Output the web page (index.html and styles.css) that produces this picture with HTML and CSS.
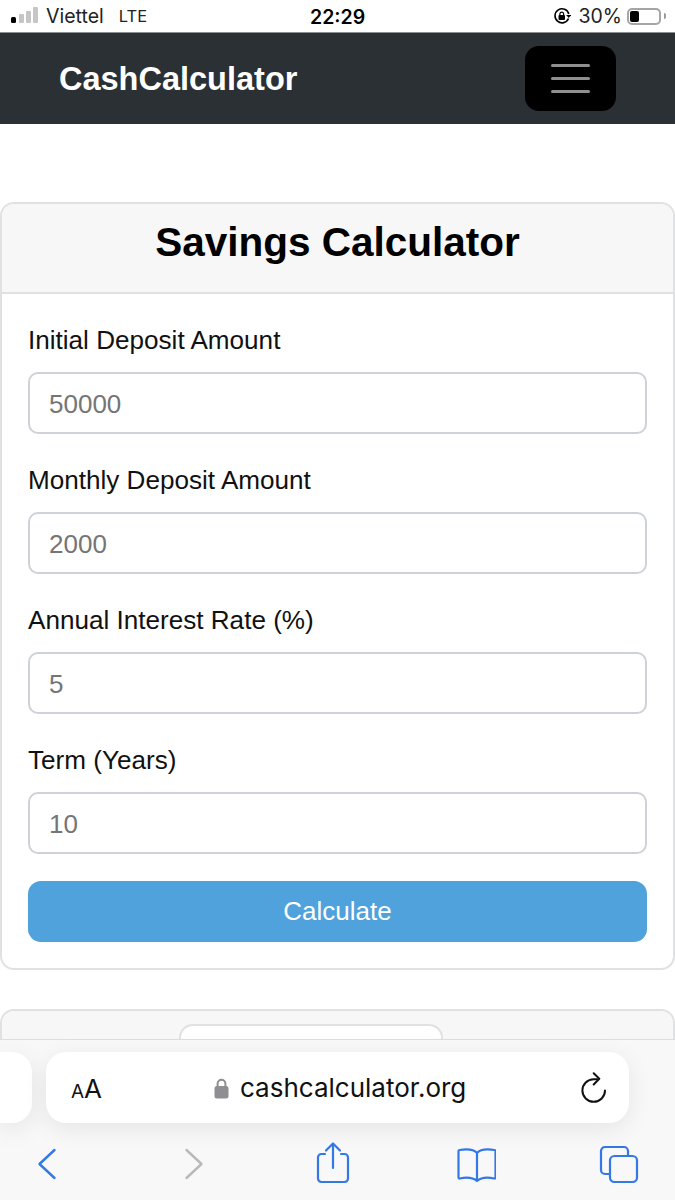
FILE: index.html
```html
<!DOCTYPE html>
<html lang="en">
<head>
<meta charset="UTF-8">
<meta name="viewport" content="width=device-width, initial-scale=1.0">
<title>Savings Calculator</title>
<link rel="stylesheet" href="styles.css">
</head>
<body>
<div class="status-bar">
  <div class="status-left">
    <svg class="signal" width="28" height="18" viewBox="0 0 28 18">
      <rect x="0" y="10" width="5" height="6" rx="1.5" fill="#000"/>
      <rect x="8" y="7" width="5" height="9" rx="1" fill="#c6c6c6"/>
      <rect x="15" y="4" width="5" height="12" rx="1" fill="#c6c6c6"/>
      <rect x="22" y="0" width="5" height="16" rx="1" fill="#c6c6c6"/>
    </svg>
    <span class="carrier">Viettel</span>
    <span class="network">LTE</span>
  </div>
  <div class="status-time">22:29</div>
  <div class="status-right">
    <svg class="rotation-lock" width="18" height="18" viewBox="0 0 18 18">
      <path d="M15.5 11.500A7 7 0 1 1 15.800 7" fill="none" stroke="#000" stroke-width="1.600"/>
      <path d="M13.200 8h5l-2.500 3z" fill="#000"/>
      <rect x="5.500" y="8" width="6.500" height="5" rx="1" fill="#000"/>
      <path d="M6.900 8V6.600a1.900 1.900 0 0 1 3.700 0V8" fill="none" stroke="#000" stroke-width="1.200"/>
    </svg>
    <span class="battery-text">30%</span>
    <div class="battery"><div class="battery-fill"></div></div>
    <div class="battery-nub"></div>
  </div>
</div>

<nav class="navbar">
  <a class="brand" href="#">CashCalculator</a>
  <button class="toggler" type="button">
    <span class="toggler-line"></span>
    <span class="toggler-line"></span>
    <span class="toggler-line"></span>
  </button>
</nav>

<main class="content">
  <section class="card">
    <h1 class="card-header">Savings Calculator</h1>
    <form class="card-body" action="#" method="post">
      <div class="field">
        <label class="field-label" for="initial">Initial Deposit Amount</label>
        <input class="field-input" id="initial" type="text" placeholder="50000">
      </div>
      <div class="field">
        <label class="field-label" for="monthly">Monthly Deposit Amount</label>
        <input class="field-input" id="monthly" type="text" placeholder="2000">
      </div>
      <div class="field">
        <label class="field-label" for="rate">Annual Interest Rate (%)</label>
        <input class="field-input" id="rate" type="text" placeholder="5">
      </div>
      <div class="field">
        <label class="field-label" for="term">Term (Years)</label>
        <input class="field-input" id="term" type="text" placeholder="10">
      </div>
      <button class="calc-btn" type="button">Calculate</button>
    </form>
  </section>

  <section class="card card-next">
    <div class="card-next-head"><div class="pill-tab"></div></div>
  </section>
</main>

<div class="safari">
  <div class="safari-tabs">
    <div class="url-stub"></div>
    <div class="url-bar">
      <span class="text-size"><span class="text-size-small">A</span>A</span>
      <div class="url-center">
        <svg width="15" height="21" viewBox="0 0 15 21">
          <rect x="0.500" y="8" width="14" height="12.500" rx="2.500" fill="#8e8e93"/>
          <path d="M3.600 9V5.600a3.900 3.900 0 0 1 7.800 0V9" fill="none" stroke="#8e8e93" stroke-width="2"/>
        </svg>
        <span class="url-text">cashcalculator.org</span>
      </div>
      <svg class="reload" width="28" height="32" viewBox="0 0 28 32">
        <path d="M18 7.200H13.700A11.300 11.300 0 1 0 25 18.500" fill="none" stroke="#111" stroke-width="2" stroke-linecap="round"/>
        <path d="M13.700 1.200L19.300 6.800 13.700 12.500" fill="none" stroke="#111" stroke-width="2" stroke-linecap="round" stroke-linejoin="round"/>
      </svg>
    </div>
  </div>
  <div class="toolbar">
    <svg width="40" height="44" viewBox="0 0 40 44">
      <path d="M27.500 9L12.500 23l15 14" fill="none" stroke="#3478e5" stroke-width="2.400" stroke-linecap="round" stroke-linejoin="round"/>
    </svg>
    <svg width="40" height="44" viewBox="0 0 40 44">
      <path d="M16.500 9l15 14-15 14" fill="none" stroke="#b9b9bc" stroke-width="2.400" stroke-linecap="round" stroke-linejoin="round"/>
    </svg>
    <svg width="40" height="44" viewBox="0 0 40 44">
      <path d="M12 13H8.500a3.500 3.500 0 0 0-3.500 3.500v21a3.500 3.500 0 0 0 3.500 3.500h23a3.500 3.500 0 0 0 3.500-3.500v-21a3.500 3.500 0 0 0-3.500-3.500H28" fill="none" stroke="#3478e5" stroke-width="2.200" stroke-linecap="round"/>
      <path d="M20 27V2.500M13 9.500l7-7 7 7" fill="none" stroke="#3478e5" stroke-width="2.200" stroke-linecap="round" stroke-linejoin="round"/>
    </svg>
    <svg width="40" height="44" viewBox="0 0 40 44">
      <g transform="translate(1 3.500)">
        <path d="M20 8.500C17 5 12 4 2.500 5.500a1 1 0 0 0-1 1V33a1 1 0 0 0 1.200 1C10 32.500 16 33 20 36.500 24 33 30 32.500 37.300 34a1 1 0 0 0 1.200-1V6.500a1 1 0 0 0-1-1C28 4 23 5 20 8.500zM20 8.500V36" fill="none" stroke="#3478e5" stroke-width="2.200" stroke-linejoin="round"/>
      </g>
    </svg>
    <svg width="40" height="44" viewBox="0 0 40 44">
      <path d="M29 14v-4a4 4 0 0 0-4-4H6a4 4 0 0 0-4 4v19a4 4 0 0 0 4 4h5" fill="none" stroke="#3478e5" stroke-width="2.200"/>
      <rect x="11" y="15" width="27" height="26" rx="4.500" fill="none" stroke="#3478e5" stroke-width="2.200"/>
    </svg>
  </div>
</div>
</body>
</html>
```

FILE: styles.css
```css
html, body {
  margin: 0;
  padding: 0;
}

body {
  position: relative;
  height: 1200px;
  overflow: hidden;
  font-family: "Liberation Sans", Arial, sans-serif;
  background-color: #fff;
  color: #000;
}

/* phone status bar */
.status-bar {
  display: flex;
  justify-content: space-between;
  align-items: center;
  height: 32px;
  padding: 0 9px 0 11px;
  border-bottom: 1px solid #8d8f91;
  font-family: Inter, "Liberation Sans", sans-serif;
  font-size: 18px;
  position: relative;
}

.status-left {
  display: flex;
  align-items: center;
  width: 170px;
  color: #222;
}

.signal {
  margin-right: 7px;
}

.carrier {
  margin-right: 15px;
  font-size: 19.5px;
}

.network {
  font-size: 16.5px;
}

.status-time {
  position: absolute;
  left: 310px;
  top: 6px;
  font-size: 19.5px;
  font-weight: 600;
  line-height: 22px;
}

.status-right {
  display: flex;
  align-items: center;
}

.rotation-lock {
  margin-right: 8px;
}

.battery-text {
  font-size: 19.5px;
  margin-right: 5px;
  color: #222;
}

.battery {
  display: flex;
  box-sizing: border-box;
  width: 34px;
  height: 17px;
  border: 2px solid #a5a5a5;
  border-radius: 5px;
  padding: 1px;
}

.battery-fill {
  width: 9px;
  background-color: #000;
  border-radius: 2px;
}

.battery-nub {
  width: 2px;
  height: 6px;
  margin-left: 3px;
  background-color: #999;
  border-radius: 0 2px 2px 0;
}

/* site header */
.navbar {
  display: flex;
  justify-content: space-between;
  align-items: center;
  height: 91px;
  padding: 0 59px;
  background-color: #2b3035;
}

.brand {
  padding-top: 2px;
  color: #fff;
  font-size: 32.5px;
  font-weight: 700;
  text-decoration: none;
}

.toggler {
  display: flex;
  flex-direction: column;
  justify-content: center;
  align-items: center;
  gap: 10px;
  box-sizing: border-box;
  width: 91px;
  height: 65px;
  padding: 0;
  background-color: #000;
  border: none;
  border-radius: 14px;
}

.toggler-line {
  display: block;
  width: 39px;
  height: 3px;
  background-color: #8f8f8f;
  border-radius: 2px;
}

.content {
  padding-top: 78px;
}

.card {
  border: 2px solid #e0e1e3;
  border-radius: 14px;
  background-color: #fff;
  overflow: hidden;
}

.card-header {
  margin: 0;
  height: 88px;
  line-height: 77px;
  text-align: center;
  font-size: 40.5px;
  font-weight: 700;
  background-color: #f7f7f7;
  border-bottom: 2px solid #e0e1e3;
}

.card-body {
  display: flex;
  flex-direction: column;
  padding: 27px 26px 26px;
}

.field {
  display: flex;
  flex-direction: column;
  height: 140px;
}

.field-label {
  font-size: 26.1px;
  line-height: 39px;
  margin-bottom: 12px;
  color: #111;
}

.field-input {
  box-sizing: border-box;
  height: 62px;
  padding: 2px 19px 0;
  border: 2px solid #ced2d6;
  border-radius: 10px;
  font-family: "Liberation Sans", Arial, sans-serif;
  font-size: 26px;
  background-color: #fff;
}

.field-input::placeholder {
  color: #757575;
  opacity: 1;
}

.calc-btn {
  height: 61px;
  border: none;
  border-radius: 13px;
  background-color: #4fa2dc;
  color: #fff;
  font-family: "Liberation Sans", Arial, sans-serif;
  font-size: 26px;
}

.card-next {
  margin-top: 39px;
  height: 120px;
}

.card-next-head {
  height: 100%;
  padding-top: 13px;
  background-color: #f7f7f7;
}

.pill-tab {
  width: 260px;
  height: 60px;
  margin-left: 177px;
  background-color: #fff;
  border: 2px solid #e0e1e3;
  border-radius: 14px;
}

/* safari bottom bar, lies over the page */
.safari {
  position: absolute;
  left: 0;
  right: 0;
  top: 1039px;
  height: 161px;
  background-color: #f8f8f9;
  border-top: 1px solid #dedee0;
  box-sizing: border-box;
}

.safari-tabs {
  display: flex;
  gap: 14px;
  padding-top: 12px;
}

.url-stub {
  width: 32px;
  height: 71px;
  background-color: #fff;
  border-radius: 0 20px 20px 0;
  box-shadow: 0 6px 24px rgba(0, 0, 0, 0.08);
}

.url-bar {
  position: relative;
  display: flex;
  align-items: center;
  justify-content: space-between;
  box-sizing: border-box;
  width: 583px;
  height: 71px;
  padding: 0 21px 0 25px;
  background-color: #fff;
  border-radius: 20px;
  box-shadow: 0 6px 24px rgba(0, 0, 0, 0.08);
  font-family: Inter, "Liberation Sans", sans-serif;
}

.text-size {
  padding-top: 2px;
  font-size: 26px;
  color: #111;
}

.text-size-small {
  font-size: 19px;
}

.url-center {
  display: flex;
  align-items: center;
  gap: 11px;
  position: absolute;
  left: 168px;
  top: 20px;
}

.url-text {
  font-size: 26px;
  line-height: 32px;
  color: #111;
}

.toolbar {
  display: flex;
  justify-content: space-between;
  padding: 18px 36px 0 27px;
}
```
